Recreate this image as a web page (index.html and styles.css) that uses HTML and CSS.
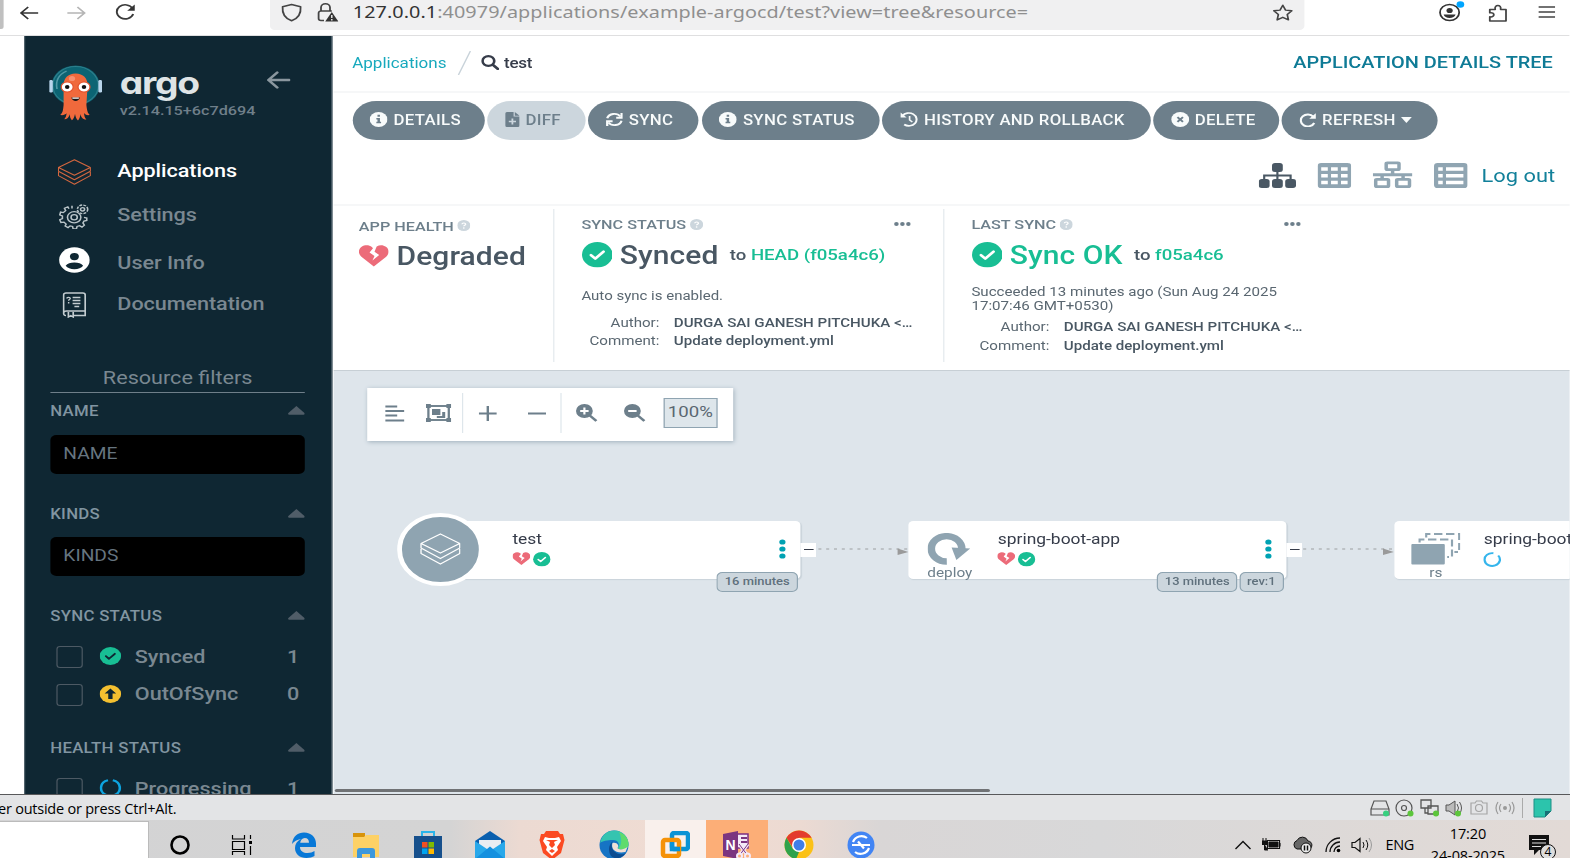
FILE: index.html
```html
<!DOCTYPE html>
<html lang="en">
<head>
<meta charset="utf-8">
<title>test - Application Details Tree - Argo CD</title>
<link rel="stylesheet" href="styles.css">
</head>
<body>
<svg width="0" height="0" class="defs" aria-hidden="true">
  <symbol id="check" viewBox="0 0 26 26"><circle cx="13" cy="13" r="13" fill="#18be94"/><path d="M7.6 13.3l3.7 3.7 7-7.2" fill="none" stroke="currentColor" stroke-width="2.5" stroke-linecap="round" stroke-linejoin="round"/></symbol>
  <symbol id="heart" viewBox="0 0 26 23"><path d="M13 22.5L2.2 12.2C-.8 9.2-.6 4.4 2.400 1.900 5-.3 9-.1 11.300 2L12.300 3.300 9.300 7.800 13.600 11.500 11.800 16.300 17.700 10.400 13.600 7 15.500 1.600C18-.4 21.300-.2 23.600 1.900 26.600 4.500 26.700 9.200 23.800 12.200z" fill="#ec6b79"/></symbol>
  <symbol id="info" viewBox="0 0 16 16"><circle cx="8" cy="8" r="8" fill="#f8fbfb"/><path d="M7 3h2.200v2H7zM6 6.500h3.200v4h1v1.600H6v-1.600h1V8H6z" fill="#6d7f8b"/></symbol>
  <symbol id="help" viewBox="0 0 12 12"><circle cx="6" cy="6" r="6" fill="#ccd6dd"/><path d="M4.300 4.700c.1-2 3.500-1.900 3.400 0 0 1-1.700 1.100-1.700 2.100" fill="none" stroke="#fff" stroke-width="1.200"/><circle cx="6" cy="8.700" r=".8" fill="#fff"/></symbol>
  <symbol id="layers" viewBox="0 0 40 32"><g fill="none" stroke="currentColor" stroke-width="1.300" stroke-linejoin="round"><path d="M20 1L39 10.500 20 20 1 10.500z"/><path d="M1 11v4L20 25.500 39 15v-4M1 16v4.500L20 31 39 20.500V16"/></g></symbol>
  <symbol id="caret" viewBox="0 0 14 9"><path d="M7 0l6.700 7c.5.800.200 1.700-.7 1.700H1C.1 8.700-.2 7.800.300 7z" fill="#505d68"/></symbol>
  <symbol id="dots" viewBox="0 0 14 4"><g fill="#6d7f8b"><circle cx="2" cy="2" r="1.900"/><circle cx="7" cy="2" r="1.900"/><circle cx="12" cy="2" r="1.900"/></g></symbol>
  <symbol id="kebab" viewBox="0 0 6 20"><g fill="#00a2b3"><circle cx="3" cy="3" r="2.600"/><circle cx="3" cy="10" r="2.600"/><circle cx="3" cy="17" r="2.600"/></g></symbol>
</svg>

<div class="guest">
  <div class="chrome">
    <span class="edge-tab"></span>
    <svg class="c-back" width="16" height="14" viewBox="0 0 16 14"><path d="M16 7H1.500M7.500 1l-6 6 6 6" fill="none" stroke="#333" stroke-width="1.500"/></svg>
    <svg class="c-fwd" width="16" height="14" viewBox="0 0 16 14"><path d="M0 7h14.500M8.500 1l6 6-6 6" fill="none" stroke="#b5b5b5" stroke-width="1.500"/></svg>
    <svg class="c-reload" width="17" height="17" viewBox="0 0 17 17"><path d="M14.500 4.500A7 7 0 1 0 15 10" fill="none" stroke="#3a3a3a" stroke-width="1.600"/><path d="M16.300.5v6.300H10z" fill="#333"/></svg>
    <div class="urlbar">
      <svg width="18" height="19" viewBox="0 0 18 19"><path d="M9 1.500l7.500 2.300c.5 7-1.500 11.500-7.500 14C3 15.300 1 10.800 1.500 3.800z" fill="none" stroke="#444" stroke-width="1.500" stroke-linejoin="round"/></svg>
      <svg class="lock" width="18" height="19" viewBox="0 0 18 19"><path d="M6 17.500H3.500a2 2 0 0 1-2-2V10a2 2 0 0 1 2-2h9M3.500 8V4.500a3.500 3.500 0 0 1 7.500 0V8" fill="none" stroke="#444" stroke-width="1.500"/><path d="M12.500 9l5.500 9.500H7z" fill="#333"/><path d="M12.500 12v3M12.500 16v1.400" stroke="#f0f0f0" stroke-width="1.200"/></svg>
      <span class="url"><b>127.0.0.1</b>:40979/applications/example-argocd/test?view=tree&amp;resource=</span>
      <svg class="star" width="18" height="18" viewBox="0 0 18 18"><path d="M9 1.200l2.300 4.900 5.200.7-3.800 3.700 1 5.400L9 13.300l-4.700 2.600 1-5.400L1.500 6.800l5.200-.7z" fill="none" stroke="#444" stroke-width="1.400" stroke-linejoin="round"/></svg>
    </div>
    <svg class="c-acct" width="22" height="22" viewBox="0 0 22 22"><circle cx="9" cy="12.500" r="8" fill="none" stroke="#333" stroke-width="1.500"/><circle cx="9" cy="10.500" r="2.600" fill="#333"/><path d="M4 14.500h10c-.5 2.300-2.500 3.500-5 3.500s-4.500-1.200-5-3.500z" fill="#333"/><circle cx="18" cy="4.500" r="3.200" fill="#00a5ff"/></svg>
    <svg class="c-ext" width="16" height="18" viewBox="0 0 16 18"><path d="M1.500 17V12.800c4.500 1 4.500-5 0-4V5.500H6C5 0 11.500 0 10.500 5.500H15V17z" fill="none" stroke="#444" stroke-width="1.500" stroke-linejoin="round"/></svg>
    <svg class="c-menu" width="14" height="12" viewBox="0 0 14 12"><path d="M0 1h14M0 6h14M0 11h14" stroke="#444" stroke-width="1.400"/></svg>
  </div>

  <div class="app">
    <aside class="sidebar">
      <div class="brand">
        <svg class="mascot" width="44" height="56" viewBox="0 0 44 56">
          <circle cx="22" cy="20.500" r="20" fill="#0c6473"/><circle cx="22" cy="20.500" r="19" fill="none" stroke="#2f7f8c" stroke-width="1"/>
          <path d="M6.500 24C5 15 8 9.500 14.500 6" fill="none" stroke="#4f98a5" stroke-width="1.400"/>
          <rect x="0" y="15" width="3" height="12.500" rx="1.200" fill="#b9d5ec"/><rect x="41" y="15" width="3" height="12.500" rx="1.200" fill="#b9d5ec"/>
          <path d="M22 8.500c6.500 0 10 5 10 11.500L31 40c.5 5.500 1 8 2.800 10-2.500.5-4-.5-4.800-2 .2 2.500.6 5 2 6.500-2.500.3-4.500-2-5-5.500-.2 2.500-.6 4.500-2 6.500-1.400-1.500-2-3.500-2.500-6.500-.5 3-1.200 5-2.600 6.300-1.400-1.800-1.600-3.800-1.800-6-.6 3-2.200 5-4.600 5 1.200-1.500 1.800-3.500 2-6-1 1.300-2.800 2.200-5.300 1.700 2.300-2.500 2.300-5 2.800-10L12 20C12 13.500 15.500 8.500 22 8.500z" fill="#f0693c"/>
          <circle cx="19" cy="13.500" r="2.600" fill="#f79070"/>
          <circle cx="15" cy="22" r="5" fill="#fff" stroke="#e3502a" stroke-width="1"/><circle cx="29" cy="22" r="5" fill="#fff" stroke="#e3502a" stroke-width="1"/>
          <circle cx="15" cy="22" r="1.900" fill="#111"/><circle cx="29" cy="22" r="1.900" fill="#111"/>
          <path d="M18.500 32.500h7c-.5 4.600-6.500 4.600-7 0z" fill="#171717"/><path d="M19.300 32.500h5.400v1.200h-5.400z" fill="#fff"/>
        </svg>
        <div class="brand-text"><span class="wordmark">argo</span><span class="version">v2.14.15+6c7d694</span></div>
        <svg class="collapse" width="20" height="18" viewBox="0 0 20 18"><path d="M19 9H2M9 1.500L1.700 9 9 16.500" fill="none" stroke="#8b979f" stroke-width="2.400" stroke-linecap="round" stroke-linejoin="round"/></svg>
      </div>
      <nav class="nav">
        <a class="nav-item active"><svg class="ni-apps" width="28" height="26" viewBox="0 0 40 32" preserveAspectRatio="none"><use href="#layers"/></svg><span>Applications</span></a>
        <a class="nav-item settings"><svg width="26" height="26" viewBox="0 0 26 26"><g fill="none" stroke="#b9c4c8" stroke-width="1.300"><path d="M11 5.500V2.800M8.500 5.800l-1-2-2.800 1.500 1 2.300-2 2-2.200-.5L.8 12l2.200 1v2.500l-2.200 1.200 1 2.800 2.500-.4 1.800 2-.8 2 2.400 1.500 1.700-1.700 2.100.6.4 2.300h2.800l.5-2.300 2.100-.8 2 1.400 2-2-1.200-2.200.9-1.900 2.300-.5v-2.500l-2.300-.6"/><circle cx="12.800" cy="14.300" r="5.600"/><circle cx="12.800" cy="14.300" r="2.600"/><circle cx="19.800" cy="6.300" r="4.300" stroke-dasharray="2.400 1"/><circle cx="19.800" cy="6.300" r="1.700"/></g></svg><span>Settings</span></a>
        <a class="nav-item user"><svg width="26" height="26" viewBox="0 0 26 26"><circle cx="13" cy="13" r="12.700" fill="#fff"/><circle cx="13" cy="9.600" r="3.700" fill="#0f2733"/><path d="M5.700 18.800c1.500-2.600 4-3.300 7.300-3.300s5.800.7 7.300 3.300c-1.600 2.400-4 3.400-7.300 3.400s-5.700-1-7.300-3.400z" fill="#0f2733"/></svg><span>User Info</span></a>
        <a class="nav-item docs"><svg width="20" height="26" viewBox="0 0 20 26"><g fill="none" stroke="#c3ccd0" stroke-width="1.400"><path d="M1 22V3a2 2 0 0 1 2-2h14a2 2 0 0 1 2 2v20.500H9M1 21c0-1.500 1-2 2.500-2H19M3 23.500C1.500 23.500 1 22.500 1 21"/><path d="M5 20v5l2-1.300L9 25v-5"/><path d="M8.500 5.500H15M8.500 8.500H15M8.500 11.500H15M10 14.500h4"/></g><path d="M3.800 6.500c0-1.700 2.900-1.500 2.700 0-.1.900-1.300 1-1.300 2.200M5.200 10v1.500" fill="none" stroke="#c3ccd0" stroke-width="1.200"/></svg><span>Documentation</span></a>
      </nav>
      <div class="rf">Resource filters</div>
      <div class="fh h1"><span>NAME</span><svg width="14" height="9"><use href="#caret"/></svg></div>
      <div class="field">NAME</div>
      <div class="fh h2"><span>KINDS</span><svg width="14" height="9"><use href="#caret"/></svg></div>
      <div class="field">KINDS</div>
      <div class="fh h3"><span>SYNC STATUS</span><svg width="14" height="9"><use href="#caret"/></svg></div>
      <div class="opt"><i class="box"></i><svg class="dark" width="18" height="18"><use href="#check"/></svg><span>Synced</span><em>1</em></div>
      <div class="opt"><i class="box"></i><svg width="18" height="18" viewBox="0 0 18 18"><circle cx="9" cy="9" r="9" fill="#f4c030"/><path d="M9 3.500l4.800 5h-3V14H7.200V8.500h-3z" fill="#0f2733"/></svg><span>OutOfSync</span><em>0</em></div>
      <div class="fh h4"><span>HEALTH STATUS</span><svg width="14" height="9"><use href="#caret"/></svg></div>
      <div class="opt"><i class="box"></i><svg width="18" height="18" viewBox="0 0 18 18"><path d="M7 1.300A7.900 7.900 0 0 0 5.500 16M11 1.300A7.900 7.900 0 0 1 12.500 16M7 16.700a8 8 0 0 0 4 0" fill="none" stroke="#0da4e0" stroke-width="2.200"/></svg><span>Progressing</span><em>1</em></div>
    </aside>

    <main class="main">
      <header class="crumbs">
        <a>Applications</a>
        <svg class="slash" width="12" height="24" viewBox="0 0 12 24"><path d="M11 0L1 24" stroke="#c9d3da" stroke-width="1.200"/></svg>
        <svg class="mag" width="15" height="15" viewBox="0 0 15 15"><circle cx="6" cy="6" r="4.900" fill="none" stroke="#363c4a" stroke-width="2.200"/><path d="M9.800 9.800l4 4" stroke="#363c4a" stroke-width="2.500" stroke-linecap="round"/></svg>
        <b>test</b>
        <strong>APPLICATION DETAILS TREE</strong>
      </header>
      <section class="actions">
        <div class="btns">
          <button class="w1"><svg width="15" height="15"><use href="#info"/></svg>DETAILS</button>
          <button class="w2 off"><svg width="12" height="15" viewBox="0 0 12 15"><path d="M1.500 0H7v4.500h5v9a1.500 1.500 0 0 1-1.500 1.500h-9A1.500 1.500 0 0 1 0 13.500v-12A1.500 1.500 0 0 1 1.500 0zM8 0l4 3.700H8z" fill="#6d7f8b"/><path d="M6 6.500v6M3 9.500h6" stroke="#ccd6dd" stroke-width="1.500"/></svg>DIFF</button>
          <button class="w3"><svg width="14" height="15" viewBox="0 0 14 15"><g fill="none" stroke="#f8fbfb" stroke-width="1.900"><path d="M1 6.300A6.200 6.200 0 0 1 12 4.500M13 8.700A6.200 6.200 0 0 1 2 10.500"/><path d="M13 1v4.700H8.500M1 14V9.300h4.500"/></g></svg>SYNC</button>
          <button class="w4"><svg width="15" height="15"><use href="#info"/></svg>SYNC STATUS</button>
          <button class="w5"><svg width="15" height="15" viewBox="0 0 15 15"><path d="M2 4A6.400 6.400 0 1 1 3.500 12.500" fill="none" stroke="#f8fbfb" stroke-width="1.700"/><path d="M.5.500v5h5z" fill="#f8fbfb"/><path d="M8 4v4l2.300 2" fill="none" stroke="#f8fbfb" stroke-width="1.400"/></svg>HISTORY AND ROLLBACK</button>
          <button class="w6"><svg width="15" height="15" viewBox="0 0 15 15"><circle cx="7.500" cy="7.500" r="7.500" fill="#f8fbfb"/><path d="M5.200 5.200l4.600 4.600M9.800 5.200L5.200 9.800" stroke="#6d7f8b" stroke-width="1.700"/></svg>DELETE</button>
          <button class="w7"><svg width="14" height="14" viewBox="0 0 14 14"><path d="M11.500 3.800A5.900 5.900 0 1 0 12.200 10" fill="none" stroke="#f8fbfb" stroke-width="1.900"/><path d="M13.500.3v5.500H8z" fill="#f8fbfb"/></svg>REFRESH<svg class="down" width="10" height="6" viewBox="0 0 9 6"><path d="M0 0h9L4.500 6z" fill="#f8fbfb"/></svg></button>
        </div>
        <div class="views">
          <svg class="v1" width="31" height="25" viewBox="0 0 31 25"><g fill="#4a5864"><rect x="11" y="0" width="9" height="9" rx="2.500"/><rect x="0" y="16" width="9" height="9" rx="2.500"/><rect x="11" y="16" width="9" height="9" rx="2.500"/><rect x="22" y="16" width="9" height="9" rx="2.500"/></g><path d="M15.500 8v9M4.500 17v-4.500h22V17" fill="none" stroke="#4a5864" stroke-width="1.800"/></svg>
          <svg class="v2" width="28" height="25" viewBox="0 0 28 24" preserveAspectRatio="none"><rect width="28" height="24" rx="3" fill="#90a5b2"/><path fill="#fff" d="M3 4h5.500v3.500H3zM11.200 4h5.600v3.500h-5.600zM19.500 4H25v3.500h-5.500zM3 10.500h5.500V14H3zM11.200 10.500h5.600V14h-5.600zM19.500 10.500H25V14h-5.500zM3 17h5.500v3.500H3zM11.200 17h5.600v3.500h-5.600zM19.500 17H25v3.500h-5.500z"/></svg>
          <svg class="v3" width="33" height="28" viewBox="0 0 34 28"><g fill="none" stroke="#90a5b2" stroke-width="3"><rect x="11.500" y="1.500" width="11" height="7" rx="1"/><rect x="2.500" y="18.500" width="11" height="7.500" rx="1"/><rect x="20.500" y="18.500" width="11" height="7.500" rx="1"/><path d="M0 13.700h34M17 9v5M8 14v4M26 14v4"/></g></svg>
          <svg class="v4" width="28" height="25" viewBox="0 0 28 24" preserveAspectRatio="none"><rect width="28" height="24" rx="3" fill="#90a5b2"/><path fill="#fff" d="M3.500 4h3.800v3.500H3.500zM10 4h14.500v3.500H10zM3.500 10.500h3.800V14H3.500zM10 10.500h14.500V14H10zM3.500 17h3.800v3.500H3.500zM10 17h14.500v3.500H10z"/></svg>
          <a>Log out</a>
        </div>
      </section>
      <section class="summary">
        <div class="panel p1">
          <h4>APP HEALTH<svg width="11" height="11"><use href="#help"/></svg></h4>
          <div class="state"><svg width="25" height="22"><use href="#heart"/></svg><b>Degraded</b></div>
        </div>
        <div class="panel p2">
          <h4>SYNC STATUS<svg width="11" height="11"><use href="#help"/></svg><svg class="more" width="14" height="4"><use href="#dots"/></svg></h4>
          <div class="state"><svg class="white" width="25.500" height="25.500"><use href="#check"/></svg><b>Synced</b><span>to <a>HEAD (f05a4c6)</a></span></div>
          <p class="auto">Auto sync is enabled.</p>
          <dl><dt>Author:</dt><dd>DURGA SAI GANESH PITCHUKA &lt;…</dd><dt>Comment:</dt><dd>Update deployment.yml</dd></dl>
        </div>
        <div class="panel p3">
          <h4>LAST SYNC<svg width="11" height="11"><use href="#help"/></svg><svg class="more" width="14" height="4"><use href="#dots"/></svg></h4>
          <div class="state green"><svg class="white" width="25.500" height="25.500"><use href="#check"/></svg><b>Sync OK</b><span>to <a>f05a4c6</a></span></div>
          <p class="when">Succeeded 13 minutes ago (Sun Aug 24 2025<br>17:07:46 GMT+0530)</p>
          <dl><dt>Author:</dt><dd>DURGA SAI GANESH PITCHUKA &lt;…</dd><dt>Comment:</dt><dd>Update deployment.yml</dd></dl>
        </div>
      </section>
      <section class="canvas">
        <div class="tools">
          <svg class="t1" width="16" height="17" viewBox="0 0 16 17"><path d="M0 1.500h10M0 6h16M0 10.500h10M0 15.500h16" stroke="#6d7f8b" stroke-width="1.900"/></svg>
          <svg class="t2" width="21" height="18" viewBox="0 0 21 18"><rect x="2" y="2" width="17" height="14" fill="none" stroke="#6d7f8b" stroke-width="1.900"/><path d="M0 0h4v4H0zM17 0h4v4h-4zM0 14h4v4H0zM17 14h4v4h-4zM5 5h7v6H5zM13.500 8H16v6H9v-2h4.500z" fill="#6d7f8b"/></svg>
          <i></i>
          <svg class="t3" width="15" height="15" viewBox="0 0 15 15"><path d="M7.500 0v15M0 7.500h15" stroke="#6d7f8b" stroke-width="2"/></svg>
          <svg class="t4" width="15" height="15" viewBox="0 0 15 15"><path d="M0 7.500h15" stroke="#6d7f8b" stroke-width="2"/></svg>
          <i></i>
          <svg class="t5" width="18" height="18" viewBox="0 0 18 18"><circle cx="7" cy="7" r="7" fill="#6d7f8b"/><path d="M11 11l6 6" stroke="#6d7f8b" stroke-width="2.400"/><path d="M7 3.500v7M3.500 7h7" stroke="#fff" stroke-width="1.800"/></svg>
          <svg class="t6" width="18" height="18" viewBox="0 0 18 18"><circle cx="7" cy="7" r="7" fill="#6d7f8b"/><path d="M11 11l6 6" stroke="#6d7f8b" stroke-width="2.400"/><path d="M3.500 7h7" stroke="#fff" stroke-width="1.800"/></svg>
          <span class="pct">100%</span>
        </div>

        <svg class="wires" width="1070" height="30" viewBox="0 0 1070 30"><g stroke="#9c9fa1" stroke-width="1.200" stroke-dasharray="2.500 4"><path d="M404 13h77M808 13h78"/></g><g fill="#9a9a9a"><path d="M470 12.500l9 3.500-9 3zM874.500 12.500l9 3.500-9 3z"/></g></svg>

        <div class="node n1">
          <span class="name">test</span>
          <span class="marks"><svg width="15" height="13.500"><use href="#heart"/></svg><svg class="white" width="15" height="14.500"><use href="#check"/></svg></span>
          <svg class="kebab" width="6" height="20"><use href="#kebab"/></svg>
          <span class="minus"></span>
          <span class="tags"><span>16 minutes</span></span>
        </div>
        <div class="disc"><svg width="34" height="32" viewBox="0 0 40 32" preserveAspectRatio="none"><use href="#layers"/></svg></div>

        <div class="node n2">
          <svg class="kind" width="36" height="32" viewBox="0 0 36 32"><path d="M16 28.500A12.700 12.700 0 1 1 28.500 16" fill="none" stroke="#8fa4b1" stroke-width="6.300"/><path d="M20 14.500l15.500 1L24 27z" fill="#8fa4b1"/></svg>
          <span class="klabel">deploy</span>
          <span class="name">spring-boot-app</span>
          <span class="marks"><svg width="15" height="13.500"><use href="#heart"/></svg><svg class="white" width="15" height="14.500"><use href="#check"/></svg></span>
          <svg class="kebab" width="6" height="20"><use href="#kebab"/></svg>
          <span class="minus"></span>
          <span class="tags"><span>13 minutes</span><span>rev:1</span></span>
        </div>

        <div class="node n3">
          <svg class="kind" width="41" height="32" viewBox="0 0 41 32"><rect x="0" y="11" width="28" height="20.500" rx="1" fill="#8fa4b1"/><path d="M7 9.500V6.500h27V24h-4" fill="none" stroke="#8fa4b1" stroke-width="1.800" stroke-dasharray="7 3"/><path d="M12.500 4.500V1H40v18h-4" fill="none" stroke="#8fa4b1" stroke-width="1.800" stroke-dasharray="7 3"/></svg>
          <span class="klabel">rs</span>
          <span class="name">spring-boot</span>
          <span class="marks"><svg width="15" height="15" viewBox="0 0 15 15"><path d="M8.500 1.200A6.400 6.400 0 1 0 12.500 3.500" fill="none" stroke="#35b5ec" stroke-width="1.900"/></svg></span>
        </div>
        <div class="hscroll"></div>
      </section>
    </main>
  </div>
</div>

<div class="vmbar">
  <span class="hint">er outside or press Ctrl+Alt.</span>
  <div class="devices">
    <svg width="20" height="18" viewBox="0 0 20 18"><path d="M4 2h12l3 8v6H1v-6zM1 10h18" fill="none" stroke="#555" stroke-width="1.200"/><circle cx="16" cy="14.500" r="3" fill="#37d07f"/></svg>
    <svg width="20" height="18" viewBox="0 0 20 18"><circle cx="9" cy="9" r="8" fill="none" stroke="#555" stroke-width="1.200"/><circle cx="9" cy="9" r="2.500" fill="none" stroke="#555" stroke-width="1.200"/><circle cx="15.500" cy="14.500" r="3" fill="#5cc53b"/></svg>
    <svg width="20" height="18" viewBox="0 0 20 18"><path d="M1 1h10v8H1zM8 7h10v8H8zM5 9v5h3" fill="#e3e4e6" stroke="#555" stroke-width="1.300"/><circle cx="16" cy="14.500" r="3" fill="#5cc53b"/></svg>
    <svg width="20" height="18" viewBox="0 0 20 18"><path d="M1 6h3l6-4v14l-6-4H1z" fill="#bbb" stroke="#555"/><path d="M12 5q3 4 0 8M14.500 3q4 6 0 12" fill="none" stroke="#555"/><circle cx="13" cy="14.500" r="3" fill="#5cc53b"/></svg>
    <svg width="20" height="18" viewBox="0 0 20 18"><path d="M1 4h4l1.500-2h5L13 4h4v11H1z" fill="none" stroke="#a5a5a5" stroke-width="1.200"/><circle cx="9" cy="9" r="3.500" fill="none" stroke="#a5a5a5" stroke-width="1.200"/></svg>
    <svg width="20" height="18" viewBox="0 0 20 18"><circle cx="10" cy="9" r="2" fill="#999"/><path d="M6 5q-3 4 0 8M14 5q3 4 0 8M3 3q-4 6 0 12M17 3q4 6 0 12" fill="none" stroke="#999" stroke-width="1.200"/></svg>
    <i></i>
    <svg width="20" height="20" viewBox="0 0 20 20"><path d="M2 1h17v12l-6 6H2z" fill="#2cc4ac" stroke="#1d8f86"/><path d="M19 13h-6v6z" fill="#176f76"/></svg>
  </div>
</div>

<div class="taskbar">
  <div class="search"></div>
  <div class="pins">
    <span><svg width="22" height="22" viewBox="0 0 22 22"><circle cx="11" cy="11" r="8.500" fill="none" stroke="#000" stroke-width="2.600"/></svg></span>
    <span><svg width="22" height="22" viewBox="0 0 22 22"><path d="M1.500 1v4h12V1M1.500 7.500h12v8h-12zM1.500 21v-3.500h12V21M19.500 1v4M19.500 12v9" fill="none" stroke="#000" stroke-width="1.200"/><path d="M18 7h3v3h-3z"/></svg></span>
    <span><svg width="26" height="26" viewBox="0 0 26 26"><path d="M1 12C2 4 7 .5 13 .5c7.500 0 12 5 12 11V15H9c0 4 3.500 6 7.500 6 3 0 5-.8 7-2v5c-2 1.300-5 2-8 2C8.500 26 4 22 4 16c0-4 2-7 6-9-4 .5-7 2.500-9 5zM9.200 10.700H18C18 8 16.500 6 13.800 6 11 6 9.500 8.200 9.200 10.700z" fill="#0878d7"/></svg></span>
    <span><svg width="28" height="26" viewBox="0 0 28 26"><path d="M1 1h12v6H1z" fill="#d8930a"/><path d="M1 5h11l2-2h13v22H1z" fill="#fdd166"/><path d="M5 26v-7a3 3 0 0 1 3-3h12a3 3 0 0 1 3 3v7h-5v-4h-8v4z" fill="#3d98dc"/></svg></span>
    <span><svg width="30" height="30" viewBox="0 0 30 30"><path d="M9 7V2h12v5" fill="none" stroke="#2bb5ea" stroke-width="2"/><path d="M1 6h28v21a3 3 0 0 1-3 3H4a3 3 0 0 1-3-3z" fill="#16508c"/><path d="M9 12h5.500v5.500H9z" fill="#f25022"/><path d="M15.500 12H21v5.500h-5.500z" fill="#7fba00"/><path d="M9 18.500h5.500V24H9z" fill="#00a4ef"/><path d="M15.500 18.500H21V24h-5.500z" fill="#ffb900"/></svg></span>
    <span><svg width="30" height="28" viewBox="0 0 30 28"><path d="M0 10L15 0l15 10v18H0z" fill="#0a5fae"/><path d="M4 9h22v10H4z" fill="#e9edf2"/><path d="M0 10l15 10L30 10v18H0z" fill="#28a8ea"/><path d="M0 28l15-12.500L30 28z" fill="#1490df"/></svg></span>
    <span><svg width="26" height="30" viewBox="0 0 26 30"><path d="M7 1h12l2 3h3l1.500 6L22 23l-9 7-9-7L.5 10 2 4h3z" fill="#fb4a22"/><path d="M6 7l4 1h6l4-1 2 4-4 6 1 3-6 6-6-6 1-3-4-6z" fill="#fff"/><path d="M7 10l4 2-1 3 3 3 3-3-1-3 4-2M10 21l3-2 3 2-3 2z" fill="#fb4a22"/></svg></span>
    <span><svg width="30" height="30" viewBox="0 0 30 30"><circle cx="15" cy="15" r="14.500" fill="#1674c4"/><path d="M1 13C3 4 9 .5 15.500.5 24 .5 29.500 7 29.500 14c0 6-8 7-11 4 3-3 1-8-4.500-8S3 11 1 13z" fill="#35c4b0"/><path d="M20 2c6 2 9.500 7 9.500 12 0 5-6 6.500-10 5 3-4 4-10 .5-17z" fill="#5fdb6c"/><path d="M14 11c-3 4-1 11 6 13 3 .8 5 0 7-1-6 8-17 7-17-4 0-3 1.500-6 4-8z" fill="#0c4c91"/><path d="M13.500 13c-2 6 3 11 13 9l2-5c-4 3-9 3-10 1 2-2 0-6-5-5z" fill="#f0dfd7"/></svg></span>
    <span class="live"><svg width="30" height="28" viewBox="0 0 30 28"><rect x="12" y="2" width="16" height="16" rx="2" fill="none" stroke="#0b93d5" stroke-width="4.500"/><rect x="3" y="9" width="16" height="16" rx="2" fill="none" stroke="#f59208" stroke-width="4.500"/><path d="M12 11v7h8" fill="none" stroke="#0b93d5" stroke-width="4.500"/></svg></span>
    <span class="alert"><svg width="28" height="28" viewBox="0 0 28 28"><path d="M13 3h12v14H13z" fill="#f4e9f7" stroke="#7c2f83" stroke-width="1.500"/><path d="M0 3l15-3v28L0 25z" fill="#7b3580"/><path d="M18 7h6M18 11h6" stroke="#7b3580" stroke-width="2"/><path d="M16 13l7.500 10M25 13l-7.500 10" stroke="#f4e9f7" stroke-width="3.200"/><path d="M16 13l7.500 10M25 13l-7.500 10" stroke="#7b3580" stroke-width="1"/><g fill="none" stroke="#f4e9f7" stroke-width="2"><circle cx="16.500" cy="25" r="2.500"/><circle cx="24.500" cy="25" r="2.500"/></g><text x="2.500" y="19" class="glyph">N</text></svg></span>
    <span><svg width="30" height="30" viewBox="0 0 30 30"><circle cx="15" cy="15" r="14.500" fill="#fbc117"/><path d="M2.500 7.700A14.500 14.500 0 0 1 27.600 7.700H15L9 18z" fill="#e33b2e"/><path d="M2.500 7.700L9 19l6 3-3 7.200A14.500 14.500 0 0 1 2.500 7.700z" fill="#2fa24c"/><circle cx="15" cy="15" r="7" fill="#fff"/><circle cx="15" cy="15" r="5.500" fill="#3f7ee8"/></svg></span>
    <span><svg width="28" height="28" viewBox="0 0 28 28"><circle cx="14" cy="14" r="13.500" fill="#4285f4"/><path d="M6 11a9 9 0 0 1 14-4M22 17a9 9 0 0 1-14 4M5 14h9l-3-3.500M23 14h-9l3 3.500" fill="none" stroke="#fff" stroke-width="2.200"/></svg></span>
  </div>
  <div class="tray">
    <svg width="18" height="12" viewBox="0 0 18 12"><path d="M1.500 10L9 2.500l7.500 7.500" fill="none" stroke="#111" stroke-width="1.400"/></svg>
    <svg class="y2" width="20" height="16" viewBox="0 0 20 16"><path d="M5.500 3.500h12v8h-12zM18 6v3.500" fill="none" stroke="#111" stroke-width="1.200"/><path d="M7 5h9v5H7zM1 1v3M4 1v3M0 4h5v3.500H0zM2.500 7v6H6" stroke="#111" fill="#111"/></svg>
    <svg class="y3" width="22" height="18" viewBox="0 0 22 18"><path d="M5 13a4.500 4.500 0 0 1 0-8.500A6 6 0 0 1 16 5c5 .5 5 7 1 8z" fill="#666" stroke="#111"/><circle cx="14" cy="12" r="5" fill="#eee" stroke="#111"/><path d="M12.500 9.500v5M15.500 9.500v5" stroke="#111" stroke-width="1.500"/></svg>
    <svg class="y4" width="18" height="18" viewBox="0 0 18 18"><path d="M2 16A14 14 0 0 1 16 2M6 16A10 10 0 0 1 16 6M10 16a6 6 0 0 1 6-6" fill="none" stroke="#111" stroke-width="1.300"/><circle cx="14.500" cy="14.500" r="1.800"/></svg>
    <svg class="y5" width="22" height="16" viewBox="0 0 22 16"><path d="M1 5.500h3l5-4v13l-5-4H1z" fill="none" stroke="#111" stroke-width="1.200"/><path d="M12 5q2 3 0 6M15 3q3.500 5 0 10" fill="none" stroke="#111"/><path d="M18 1q5 7 0 14" fill="none" stroke="#999"/></svg>
    <span class="lang">ENG</span>
    <span class="clock"><span>17:20</span><span>24-08-2025</span></span>
    <span class="notif"><svg width="22" height="22" viewBox="0 0 22 22"><path d="M1 1h20v15H11l-5 5v-5H1z" fill="#111"/><path d="M4 5.500h14M4 9h14M4 12.500h9" stroke="#ddd" stroke-width="1.200"/></svg><b>4</b></span>
  </div>
</div>
</body>
</html>
```
FILE: styles.css
```css
* { box-sizing: border-box; }
body { margin: 0; width: 1570px; height: 858px; overflow: hidden; background: #fff; font-family: Roboto, "Liberation Sans", sans-serif; }
svg { display: block; flex: none; }
.defs { position: absolute; }
.dark { color: #0f2733; }
.white { color: #fff; }

/* Guest display is stretched horizontally by the host window. */
.guest { width: 1308.4px; height: 794px; overflow: hidden; transform: scaleX(1.2); transform-origin: 0 0; }

.chrome { height: 36px; display: flex; align-items: flex-start; border-bottom: 1.500px solid #dfdfe0; background: #fff; }
.edge-tab { width: 2.500px; height: 29px; background: #c0c0c0; border-radius: 0 0 2px 0; }
.c-back { margin: 6px 0 0 13px; }
.c-fwd { margin: 6px 0 0 24.500px; }
.c-reload { margin: 4px 0 0 23.500px; }
.urlbar { width: 862px; height: 30px; margin-left: 112.500px; padding-left: 8.500px; display: flex; align-items: flex-start; background: #f0f0f1; border-radius: 0 0 4px 4px; }
.urlbar svg { margin-top: 3px; }
.urlbar .lock { margin-left: 12px; }
.url { margin-left: 12.500px; width: 560px; line-height: 24px; font-family: "Noto Sans", sans-serif; font-size: 16.500px; letter-spacing: .05px; color: #8f8f8f; white-space: nowrap; }
.url b { font-weight: 400; color: #333; }
.urlbar .star { margin-left: 206px; margin-top: 4px; }
.c-acct { margin: 0 0 0 111.500px; }
.c-ext { margin: 4px 0 0 19.500px; }
.c-menu { margin: 6px 0 0 25.500px; }

.app { display: flex; height: 758px; padding-left: 19.500px; }
.sidebar { width: 257.500px; flex: none; background: #0f2733; overflow: hidden; border-right: 1px solid #52636d; border-left: 1px solid #52636d; padding: 0 21.700px 0 21.300px; }
.brand { display: flex; height: 112px; padding-top: 29px; margin-left: -1px; }
.brand-text { margin-left: 15px; width: 122px; display: flex; flex-direction: column; }
.wordmark { font: 700 31px/35px Inter, sans-serif; font-feature-settings: "cv11"; letter-spacing: -1px; color: #dfe4e6; height: 36px; }
.version { font-size: 13.500px; font-weight: 500; line-height: 18px; color: #6f7f8a; white-space: nowrap; }
.collapse { margin-top: 6px; margin-left: .500px; }
.nav { height: 216px; }
.nav-item { height: 44px; display: flex; align-items: center; color: #7a8891; font-size: 18px; font-weight: 500; letter-spacing: -.05px; }
.nav-item svg { width: 40px; padding: 0 7px; }
.nav-item span { margin-left: 16px; }
.nav-item.active { color: #fff; }
.nav-item svg.ni-apps { color: #d4673f; padding: 0 6px; height: 26px; margin-top: 4px; }
.nav-item.settings svg { margin-top: 3px; }
.nav-item.user { height: 52px; }
.nav-item.user svg { margin-top: -4px; }
.nav-item.docs { height: 30px; }
.nav-item.docs svg { padding: 0 10px; margin-top: 3px; }
.rf { height: 29px; line-height: 28px; border-bottom: 1.500px solid #6f7f8a; text-align: center; font-size: 18px; color: #7a8891; }
.fh { display: flex; justify-content: space-between; align-items: center; height: 20px; font-size: 14px; font-weight: 500; letter-spacing: .25px; color: #8195a1; }
.fh svg { margin-top: -1px; }
.h1 { margin-top: 8px; }
.h2 { margin-top: 30px; }
.h3 { margin-top: 30px; margin-bottom: 12px; }
.h4 { margin-top: 25px; margin-bottom: 12px; }
.field { height: 39px; margin-top: 13.500px; padding-left: 11px; line-height: 38px; background: #000; border-radius: 5px; font-size: 16px; color: #667580; }
.h2 + .field { margin-top: 13px; }
.opt { height: 37.500px; display: flex; align-items: center; color: #7a8891; font-size: 18px; font-weight: 500; }
.box { width: 22px; height: 22px; margin: 2px 14px 0 5.500px; border: 1.700px solid #4d5a64; border-radius: 3px; }
.opt span { margin-left: 11px; flex: 1; }
.opt em { font-style: normal; margin-right: 5px; }

.main { flex: 1; min-width: 0; padding-left: .500px; display: flex; flex-direction: column; }
.crumbs { height: 57px; flex: none; padding: 0 14.400px 2px 16px; display: flex; align-items: center; border-bottom: 2px solid #f6f7f8; font-size: 14.200px; }
.crumbs a { color: #18a9bd; width: 87.500px; letter-spacing: 0; }
.crumbs .mag { margin: 0 4px 0 8px; }
.crumbs b { font-weight: 500; color: #363c4a; letter-spacing: -.2px; }
.crumbs strong { margin-left: auto; font-weight: 500; font-size: 16.600px; color: #0f7b96; }
.actions { height: 113px; flex: none; border-bottom: 2px solid #f6f7f8; padding: 8px 12.500px 0 16px; }
.btns { display: flex; gap: 2.100px; }
.btns button { height: 39px; border: 0; border-radius: 20px; padding: 0 0 2px 14.500px; display: flex; align-items: center; gap: 5px; background: #6d7f8b; color: #f8fbfb; font: 500 14px Roboto, sans-serif; letter-spacing: .25px; white-space: nowrap; }
.btns button.off { background: #ccd6dd; color: #6d7f8b; }
.w1 { width: 110.800px; } .w2 { width: 82px; } .w3 { width: 92px; } .w4 { width: 148.800px; } .w5 { width: 223.600px; } .w6 { width: 105px; } .w7 { width: 129.500px; }
.down { margin-left: -1.500px; }
.views { display: flex; justify-content: flex-end; align-items: center; height: 70px; }
.v2 { margin-left: 17.800px; } .v3 { margin-left: 18px; } .v4 { margin-left: 18px; }
.views a { margin-left: 11.500px; font-size: 18.200px; color: #12809a; }
.summary { height: 165px; flex: none; display: flex; border-bottom: 1.500px solid #c7cfd5; padding: 3px 0 8px 0; }
.panel { padding: 6px 0 0 22.500px; border-left: 1.500px solid #e3e9ed; }
.p1 { width: 183.500px; padding-left: 21.500px; border: 0; padding-top: 7.500px; }
.p2, .p3 { width: 325px; }
h4 { margin: 0; height: 18px; display: flex; align-items: center; gap: 3px; font-size: 13.500px; font-weight: 500; color: #6d7f8b; }
.more { margin-left: auto; margin-right: 27.500px; }
.state { display: flex; align-items: center; height: 44px; color: #495763; }
.p1 .state { height: 43px; }
.state b { font-size: 25px; font-weight: 500; margin-left: 6.500px; letter-spacing: .05px; }
.state span { font-size: 15.500px; font-weight: 500; margin-left: 9.500px; }
.state a, .state.green b { color: #18be94; }
.auto { margin: 10px 0 9px; font-size: 12.500px; line-height: 18px; color: #5a6771; }
.when { margin: 8px 0 5px; font-size: 12.600px; line-height: 14px; color: #5a6771; }
dl { margin: 0; display: grid; grid-template-columns: 65px 200px; column-gap: 12px; font-size: 12.600px; line-height: 18px; color: #5a6771; white-space: nowrap; }
dt { text-align: right; }
dd { margin: 0; font-weight: 500; color: #495763; }
.p3 dl { line-height: 18.500px; }

.canvas { flex: 1; position: relative; background: #dee5eb; overflow: hidden; }
.tools { position: absolute; left: 28.500px; top: 17px; width: 305px; height: 53px; background: #fff; box-shadow: 1px 1px 4px #9fb0bb; display: flex; align-items: center; padding: 0 13px 3px 14.500px; }
.tools i { width: 1px; height: 40px; background: #dee6eb; }
.t2 { margin: 0 9.500px 0 18px; } .t3 { margin: 0 25.500px 0 13px; } .t4 { margin-right: 12.500px; } .t5 { margin: 0 22px 0 11.500px; }
.pct { margin-left: auto; width: 45.500px; height: 30px; border: 1.500px solid #8fa4b1; background: #dee6eb; font-size: 15.500px; line-height: 27px; text-align: center; color: #5a6771; }
.wires { position: absolute; left: 0; top: 165px; }
.node { position: absolute; top: 150px; height: 58px; background: #fff; border-radius: 4px; box-shadow: 1px 1px 1px #c9d3da; }
.n1 { left: 89.500px; width: 300px; }
.n2 { left: 479px; width: 315.500px; }
.n3 { left: 884px; width: 316px; }
.name { position: absolute; left: 75px; top: 9.500px; font-size: 14.500px; line-height: 18px; color: #363c4a; white-space: nowrap; }
.marks { position: absolute; left: 74.500px; top: 31px; display: flex; gap: 2px; }
.n1 .name, .n1 .marks { left: 60px; }
.kebab { position: absolute; right: 12px; top: 18px; }
.minus { position: absolute; right: -13px; top: 21.500px; width: 13px; height: 14px; background: #fff; display: grid; place-items: center; }
.minus::before { content: ""; width: 8px; height: 1.500px; background: #363c4a; }
.tags { position: absolute; right: 2.500px; top: 51px; display: flex; gap: 1.500px; }
.tags span { height: 20px; padding: 0 5.500px; border: 1px solid #8fa4b1; border-radius: 5px; background: #ccd6dd; font-size: 10.800px; font-weight: 500; line-height: 18px; color: #5f707c; white-space: nowrap; }
.kind { position: absolute; left: 16.500px; top: 12px; }
.n3 .kind { left: 14.500px; }
.klabel { position: absolute; left: 0; width: 70px; top: 43.500px; text-align: center; font-size: 12.800px; line-height: 16px; color: #6d7f8b; }
.disc { position: absolute; left: 53px; top: 142px; width: 72.500px; height: 72.500px; border-radius: 50%; border: 4.500px solid #fff; background: #8fa4b1; display: grid; place-items: center; color: #fff; }
.hscroll { position: absolute; left: 1.500px; bottom: 2px; width: 545.500px; height: 3px; border-radius: 2px; background: #707275; }

.vmbar { height: 26px; padding-top: 1px; border-top: 1.500px solid #58585a; background: #e3e4e6; display: flex; align-items: center; justify-content: space-between; overflow: hidden; }
.hint { margin-left: -2px; font: 14.500px "Open Sans", sans-serif; letter-spacing: -.23px; color: #000; white-space: nowrap; }
.devices { display: flex; align-items: center; gap: 5px; margin-right: 18px; }
.devices i { width: 1px; height: 20px; background: #aaa; margin: 0 4px 0 2px; }

.taskbar { height: 38px; display: flex; overflow: hidden; background: linear-gradient(90deg, #d3d3d4 0, #d4d4d4 450px, #ecdad2 520px, #f0dcd3 700px, #ecdad2 800px, #d9d6d6 880px, #d8d8d9 1100px, #e2dad6 1570px); }
.search { width: 149px; margin-top: 1px; background: #fff; border-right: 1px solid #bbb; border-top: 1px solid #bbb; }
.pins { display: flex; height: 49px; }
.pins span { width: 61.950px; display: grid; place-items: center; }
.pins .live { background: #f9f0ec; }
.pins .alert { background: #fcae77; }
.glyph { font: 700 14px "Liberation Sans", sans-serif; fill: #fff; }
.tray { margin-left: auto; padding-right: 20px; display: flex; align-items: center; height: 49px; font: 14.500px "Open Sans", sans-serif; color: #000; }
.y2, .y3, .y4 { margin-left: 10px; }
.y5 { margin-left: 9px; }
.lang { margin-left: 13px; letter-spacing: -.4px; }
.clock { margin-left: 17px; display: flex; flex-direction: column; align-items: center; line-height: 22px; letter-spacing: -.15px; margin-top: 1px; }
.notif { position: relative; margin-left: 23px; }
.notif b { position: absolute; right: -6px; top: 10px; width: 16px; height: 16px; border-radius: 8px; background: #ddd; border: 1px solid #111; font-size: 12px; font-weight: 400; line-height: 14px; text-align: center; }
```
